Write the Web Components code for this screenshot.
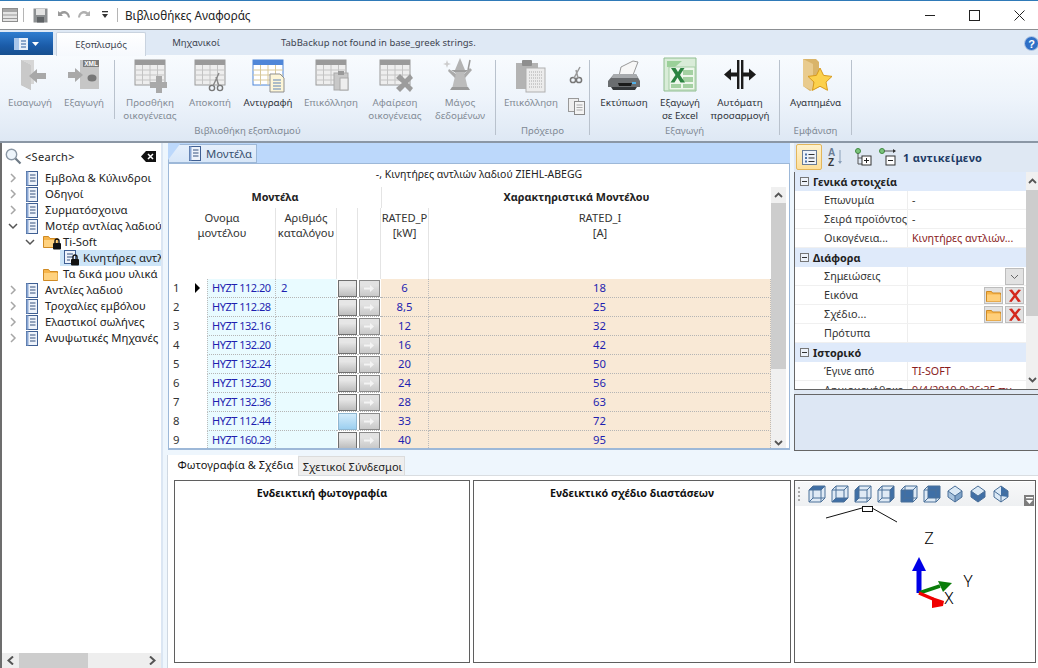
<!DOCTYPE html>
<html lang="el">
<head>
<meta charset="utf-8">
<title>Βιβλιοθήκες Αναφοράς</title>
<style>
  html, body { margin: 0; padding: 0; }
  body { width: 1038px; height: 668px; overflow: hidden; font: 11.3px "Noto Sans", "Liberation Sans", sans-serif; color: #222; }
</style>
</head>
<body>
<app-shell>
  <title-bar slot="title">Βιβλιοθήκες Αναφοράς</title-bar>
  <ribbon-tabs slot="tabs"></ribbon-tabs>
  <ribbon-bar slot="ribbon">
    <ribbon-group label="Βιβλιοθήκη εξοπλισμού" style="--w:495px">
      <ribbon-item icon="import" disabled style="--w:54px;margin-left:3px">Εισαγωγή</ribbon-item>
      <ribbon-item icon="xml" disabled style="--w:54px">Εξαγωγή</ribbon-item>
      <ribbon-sep inner></ribbon-sep>
      <ribbon-item icon="gridadd" disabled style="--w:68px">Προσθήκη<br>οικογένειας</ribbon-item>
      <ribbon-item icon="gridcut" disabled style="--w:52px">Αποκοπή</ribbon-item>
      <ribbon-item icon="gridcopy" style="--w:64px">Αντιγραφή</ribbon-item>
      <ribbon-item icon="gridpaste" disabled style="--w:62px">Επικόλληση</ribbon-item>
      <ribbon-item icon="griddel" disabled style="--w:66px">Αφαίρεση<br>οικογένειας</ribbon-item>
      <ribbon-item icon="wizard" disabled style="--w:64px">Μάγος<br>δεδομένων</ribbon-item>
    </ribbon-group>
    <ribbon-sep></ribbon-sep>
    <ribbon-group label="Πρόχειρο" style="--w:93px">
      <ribbon-item icon="clipboard" disabled style="--w:70px">Επικόλληση</ribbon-item>
      <ribbon-mini></ribbon-mini>
    </ribbon-group>
    <ribbon-sep></ribbon-sep>
    <ribbon-group label="Εξαγωγή" style="--w:189px">
      <ribbon-item icon="printer" style="--w:64px;margin-left:2px">Εκτύπωση</ribbon-item>
      <ribbon-item icon="excel" style="--w:48px">Εξαγωγή<br>σε Excel</ribbon-item>
      <ribbon-item icon="autofit" style="--w:72px">Αυτόματη<br>προσαρμογή</ribbon-item>
    </ribbon-group>
    <ribbon-sep></ribbon-sep>
    <ribbon-group label="Εμφάνιση" style="--w:71px">
      <ribbon-item icon="favorite" style="--w:71px">Αγαπημένα</ribbon-item>
    </ribbon-group>
    <ribbon-sep></ribbon-sep>
  </ribbon-bar>

  <tree-panel slot="tree">
    <tree-node kind="book" chev="right">Εμβολα &amp; Κύλινδροι</tree-node>
    <tree-node kind="book" chev="right">Οδηγοί</tree-node>
    <tree-node kind="book" chev="right">Συρματόσχοινα</tree-node>
    <tree-node kind="book" chev="down">Μοτέρ αντλίας λαδιού</tree-node>
    <tree-node kind="lockfolder" chev="down" depth="1">Ti-Soft</tree-node>
    <tree-node kind="lockbook" depth="2" selected>Κινητήρες αντλιών λαδιού</tree-node>
    <tree-node kind="folder" depth="1">Τα δικά μου υλικά</tree-node>
    <tree-node kind="book" chev="right">Αντλίες λαδιού</tree-node>
    <tree-node kind="book" chev="right">Τροχαλίες εμβόλου</tree-node>
    <tree-node kind="book" chev="right">Ελαστικοί σωλήνες</tree-node>
    <tree-node kind="book" chev="right">Ανυψωτικές Μηχανές</tree-node>
  </tree-panel>

  <model-grid slot="grid" caption="-, Κινητήρες αντλιών λαδιού ZIEHL-ABEGG"></model-grid>

  <prop-panel slot="props">
    <prop-group>Γενικά στοιχεία</prop-group>
    <prop-row name="Επωνυμία" value="-"></prop-row>
    <prop-row name="Σειρά προϊόντος" value="-"></prop-row>
    <prop-row name="Οικογένεια..." value="Κινητήρες αντλιών..." red></prop-row>
    <prop-group>Διάφορα</prop-group>
    <prop-row name="Σημειώσεις" action="drop"></prop-row>
    <prop-row name="Εικόνα" action="file"></prop-row>
    <prop-row name="Σχέδιο..." action="file"></prop-row>
    <prop-row name="Πρότυπα"></prop-row>
    <prop-group>Ιστορικό</prop-group>
    <prop-row name="Έγινε από" value="TI-SOFT" red></prop-row>
    <prop-row name="Δημιουργήθηκε" value="9/4/2019 9:26:35 πμ" red></prop-row>
  </prop-panel>

  <lower-panel slot="lower">
    <titled-box>Ενδεικτική φωτογραφία</titled-box>
    <titled-box>Ενδεικτικό σχέδιο διαστάσεων</titled-box>
    <view-3d></view-3d>
  </lower-panel>
</app-shell>

<script>
// icon helpers, everything is drawn in a 36x36 box unless noted
const svg = (w, h, body, vb) => `<svg xmlns="http://www.w3.org/2000/svg" width="${w}" height="${h}" viewBox="${vb || `0 0 ${w} ${h}`}">${body}</svg>`;

const table = (head, cell, line, x = 3) => `
  <rect x="${x}" y="3" width="30" height="25" fill="${cell}" stroke="${head}"/>
  <rect x="${x}" y="3" width="30" height="5" fill="${head}"/>
  <path d="M${x} 13h30M${x} 18h30M${x} 23h30M${x + 7.5} 8v20M${x + 15} 8v20M${x + 22.5} 8v20" stroke="${line}" fill="none"/>`;
const grayTable = table("#9a9a9a", "#eeeeee", "#c4c4c4");

const RIBBON_ICONS = {
  import: `<path d="M9 3l10 5v25l-10-5z" fill="#bdbdbd"/><path d="M9 3h13v24h-3v-19z" fill="#d6d6d6"/><path d="M9 28l10 5v-25l-10-5z" fill="#c9c9c9"/>
           <path d="M17 19l8-7v4h9v6h-9v4z" fill="#a8a8a8"/>`,
  xml: `<path d="M14 3h19v29h-19z" fill="#c6c6c6"/><rect x="17" y="3" width="16" height="7" fill="#7b7b7b"/>
        <text x="25" y="9" font-family="Liberation Sans" font-size="6.5" font-weight="700" text-anchor="middle" fill="#fff">XML</text>
        <ellipse cx="26" cy="21" rx="4.5" ry="3.5" fill="#777"/><path d="M2 15h7v-4l8 7-8 7v-4h-7z" fill="#a9a9a9"/>`,
  gridadd: grayTable + `<path d="M24 19h6v6h5v6h-5v5h-6v-5h-6v-6h6z" fill="#a9a9a9"/>`,
  gridcut: grayTable + `<circle cx="20" cy="31" r="2.6" fill="none" stroke="#777" stroke-width="1.4"/><circle cx="28" cy="31" r="2.6" fill="none" stroke="#777" stroke-width="1.4"/><path d="M21 29l6-13M27 29l-3-9" stroke="#888" stroke-width="1.4"/>`,
  gridcopy: table("#4f86d8", "#ffffff", "#d9c99a") + `<path d="M20 17h10l4 4v14h-14z" fill="#fdf6d8" stroke="#8f8f8f"/><path d="M23 23h8M23 26h8M23 29h8M23 32h8" stroke="#5d83b8"/>`,
  gridpaste: grayTable + `<rect x="21" y="16" width="14" height="17" fill="#c8c8c8" stroke="#aaa"/><rect x="25" y="14" width="6" height="4" fill="#999"/><rect x="27" y="21" width="8" height="12" fill="#eee" stroke="#aaa"/>`,
  griddel: grayTable + `<path d="M19 21l4-4 5 5 5-5 3 4-5 5 5 5-3 4-5-5-5 5-4-4 6-5z" fill="#9c9c9c"/>`,
  wizard: `<path d="M18 1l-5 12h10z" fill="#b3b3b3"/><path d="M9 13h18l-5 3h-8z" fill="#9d9d9d"/><path d="M14 15h8l4 17h-16z" fill="#bcbcbc"/><path d="M14 17l-7-5-1 2 7 7zM22 17l6-6 2 2-7 8z" fill="#aaa"/><path d="M28 3l-2 10" stroke="#999" stroke-width="1.5"/><path d="M5 3l1 3 3 1-3 1-1 3-1-3-3-1 3-1z" fill="#ccc"/><path d="M10 30h16l2 3h-20z" fill="#9a9a9a"/>`,
  clipboard: `<rect x="3" y="6" width="22" height="26" fill="#b3b3b3"/><rect x="9" y="3" width="10" height="6" rx="1" fill="#8e8e8e"/><rect x="13" y="11" width="19" height="24" fill="#ececec" stroke="#b0b0b0"/><path d="M16 15h13M16 18h13M16 21h13M16 24h13M16 27h13M16 30h13" stroke="#aaa" stroke-dasharray="1 1"/>`,
  printer: `<path d="M15 10l12-6 5 1-5 13-14 1z" fill="#f7f7f7" stroke="#999"/><path d="M2 24l6-7h22l4 7v6h-32z" fill="#6a6d70"/><path d="M8 17h22l2 4h-27z" fill="#a8abae"/><path d="M5 30h26l-2 3h-22z" fill="#34373a"/><path d="M12 26h14l-1 3h-12z" fill="#1a1a1a"/><rect x="26" y="25" width="4" height="2" fill="#52b0e8"/>`,
  excel: `<path d="M2 1h32v33h-32z" fill="#d9ecd8" stroke="#8fbd90"/><path d="M5 4h15l-7 6h-8z" fill="#9bd099"/><rect x="7" y="10" width="26" height="23" fill="#eef7ec" stroke="#a6cea5"/><path d="M21 13h10v5h-10zM21 20h10v5h-10zM9 27h10v4h-10zM21 27h10v4h-10z" fill="#a4d1a2"/><path d="M9 11h4.500l2.500 4 2.500-4h4l-4.500 7 5 7.500h-4.500l-3-5-3 5h-4l5-7.500z" fill="#2b8340"/>`,
  autofit: `<rect x="15" y="3" width="2.4" height="29" fill="#1b1b1b"/><rect x="19" y="3" width="2.4" height="29" fill="#1b1b1b"/><path d="M2 17.5l7-6v4h6v4h-6v4zM34 17.5l-7-6v4h-6v4h6v4z" fill="#1b1b1b"/>`,
  favorite: `<path d="M5 2h13l3 3v25l-9 4-7-5z" fill="#d9b46a"/><path d="M5 2l10 5v27l-10-5z" fill="#e9cb8e"/><path d="M22 11l3.6 7.4 8.4 1-6 5.7 1.5 8.2-7.5-4-7.5 4 1.5-8.2-6-5.7 8.4-1z" fill="#fcd14d" stroke="#d89a1c"/>`
};

const ICON_BOOK = svg(12, 15, `<rect x=".5" y=".5" width="11" height="14" fill="#eef3fb" stroke="#3f5f93"/><rect x=".5" y=".5" width="2" height="14" fill="#8aa7d4"/><path d="M4 4h5.500M4 7h5.500M4 10h5.500" stroke="#34507d"/>`);
const ICON_FOLDER = svg(15, 14, `<path d="M.5 2.5h5l1.5 2h7.500v9h-14z" fill="#f7b54a" stroke="#cf8a24"/><path d="M1 6h13.500v7h-13.500z" fill="#ffd27f"/>`);
const ICON_LOCK = `<rect x="1" y="5" width="8" height="6.500" rx="1" fill="#111"/><path d="M3 5V3a2 2 0 0 1 4 0v2" fill="none" stroke="#111" stroke-width="1.400"/>`;

const TREE_ICONS = {
  book: ICON_BOOK,
  folder: ICON_FOLDER,
  lockfolder: svg(20, 16, `<path d="M.5 2.500h5l1.500 2h7.500v9h-14z" fill="#f7b54a" stroke="#cf8a24"/><path d="M1 6h13.500v7h-13.500z" fill="#ffd27f"/><g transform="translate(9 4)">${ICON_LOCK}</g>`),
  lockbook: svg(17, 16, `<rect x=".5" y=".5" width="11" height="13" fill="#eef3fb" stroke="#3f5f93"/><path d="M3 4h6M3 7h6M3 10h3" stroke="#34507d"/><g transform="translate(6 4)">${ICON_LOCK}</g>`)
};

class AppShell extends HTMLElement {
  constructor() {
    super();
    this.attachShadow({ mode: "open" }).innerHTML = `
      <style>
        :host { display: grid; width: 1038px; height: 668px; overflow: hidden; background: #eef6fd;
                grid-template-rows: 30px 25px 88px 307px 1fr; grid-template-columns: 163px 1fr; }
        ::slotted([slot=title]), ::slotted([slot=tabs]), ::slotted([slot=ribbon]) { grid-column: 1 / 3; }
        ::slotted([slot=tree]) { grid-row: 4 / 6; }
        .upper { display: flex; gap: 4px; padding-left: 5px; min-height: 0; }
      </style>
      <slot name="title"></slot><slot name="tabs"></slot><slot name="ribbon"></slot>
      <slot name="tree"></slot>
      <div class="upper"><slot name="grid"></slot><slot name="props"></slot></div>
      <slot name="lower"></slot>`;
  }
}

class TitleBar extends HTMLElement {
  constructor() {
    super();
    this.attachShadow({ mode: "open" }).innerHTML = `
      <style>
        :host { display: flex; align-items: center; height: 28px; background: #fff; border-top: 1px solid #2f7ab8; border-bottom: 1px solid #8c8f92; font-size: 11.7px; color: #222; overflow: hidden; }
        .ic { display: flex; margin-left: 2px; flex: none; }
        .bar { width: 1px; height: 14px; background: #b5b5b5; flex: none; }
        .text { margin-left: 7px; flex: 1; }
        .wins { display: flex; margin-right: -4px; flex: none; }
        .wins span { display: flex; width: 45px; justify-content: center; align-items: center; }
      </style>
      <span class="ic">${svg(16, 16, `<rect x=".5" y="1.500" width="15" height="13" fill="#e4e4e4" stroke="#8e8e8e"/><rect x="1" y="2" width="14" height="3" fill="#a6a6a6"/><path d="M1 8h14M1 11.500h14" stroke="#9a9a9a"/>`)}</span>
      <span class="bar" style="margin-left:5px"></span>
      <span class="ic" style="margin-left:9px">${svg(15, 15, `<rect x=".5" y=".5" width="14" height="14" fill="#8d9092"/><rect x="3" y="1" width="9" height="6" fill="#e3e3e3"/><rect x="4" y="9" width="7" height="5.500" fill="#5f6366"/>`)}</span>
      <span class="ic" style="margin-left:9px">${svg(14, 13, `<path d="M1 2v5h5L4.500 5.500C7 3.500 10.500 4.500 11 8.500l2 0C12.500 2.500 7 .5 3 3.500z" fill="#9a9a9a"/>`)}</span>
      <span class="ic" style="margin-left:6px">${svg(14, 13, `<path d="M13 2v5H8l1.500-1.500C7 3.500 3.500 4.500 3 8.500l-2 0C1.500 2.500 7 .5 11 3.500z" fill="#b0b0b0"/>`)}</span>
      <span class="ic" style="margin-left:11px">${svg(7, 8, `<rect y="0" width="6" height="1.300" fill="#333"/><path d="M0 3h6l-3 4z" fill="#333"/>`)}</span>
      <span class="bar" style="margin-left:8px"></span>
      <span class="text"><slot></slot></span>
      <span class="wins">
        <span>${svg(10, 10, `<path d="M0 5.500h10" stroke="#222"/>`)}</span>
        <span>${svg(11, 11, `<rect x=".5" y=".5" width="10" height="10" fill="none" stroke="#222"/>`)}</span>
        <span>${svg(11, 11, `<path d="M.5.500l10 10M10.500.5l-10 10" stroke="#222"/>`)}</span>
      </span>`;
  }
}

class RibbonTabs extends HTMLElement {
  constructor() {
    super();
    this.attachShadow({ mode: "open" }).innerHTML = `
      <style>
        :host { display: flex; height: 25px; background: #dfe9f5; align-items: stretch; font-size: 9.5px; color: #3d4450; position: relative; }
        .app { width: 53px; margin-top: 2px; background: linear-gradient(#2f7ed0, #1b5ba8 60%, #17508f); display: flex; align-items: center; justify-content: center; gap: 4px; }
        .tab { display: flex; align-items: center; justify-content: center; }
        .on { width: 90px; margin: 2px 0 -1px 3px; background: linear-gradient(#fff, #f6f9fd); border: 1px solid #c9d3df; border-bottom: 0; border-radius: 2px 2px 0 0; box-sizing: border-box; }
        .off { width: 100px; }
        .note { margin-left: 35px; }
        .help { position: absolute; right: -1px; top: 6px; }
      </style>
      <div class="app">${svg(14, 12, `<rect width="14" height="12" fill="#eaf1fa"/><rect x="0" width="5" height="12" fill="#a9c6ea"/><path d="M7 3h5M7 6h5M7 9h5" stroke="#2f5f9d"/>`)}${svg(7, 4, `<path d="M0 0h7l-3.500 4z" fill="#fff"/>`)}</div>
      <div class="tab on">Εξοπλισμός</div>
      <div class="tab off">Μηχανικοί</div>
      <div class="tab note">TabBackup not found in base_greek strings.</div>
      <div class="help">${svg(15, 15, `<circle cx="7.500" cy="7.500" r="7" fill="#2f6fc6" stroke="#b8cbe6"/><text x="7.500" y="11.500" font-family="Liberation Sans" font-weight="700" font-size="11" text-anchor="middle" fill="#fff">?</text>`)}</div>`;
  }
}

class RibbonBar extends HTMLElement {
  constructor() {
    super();
    this.attachShadow({ mode: "open" }).innerHTML = `
      <style>
        :host { display: flex; height: 86px; border-bottom: 2px solid #8b97a5; background: linear-gradient(#f8fbfe, #eef4fb 50%, #dee8f4); border-top: 1px solid #d3dde9; margin-top: -1px; }
      </style>
      <slot></slot>`;
  }
}

class RibbonGroup extends HTMLElement {
  constructor() {
    super();
    this.attachShadow({ mode: "open" }).innerHTML = `
      <style>
        :host { display: flex; flex-direction: column; width: var(--w); flex: none; box-sizing: border-box; }
        .items { display: flex; flex: 1; min-height: 0; }
        .label { height: 20px; flex: none; text-align: center; font-size: 9.6px; color: #7f8994; line-height: 20px; }
      </style>
      <div class="items"><slot></slot></div>
      <div class="label">${this.getAttribute("label")}</div>`;
  }
}

class RibbonItem extends HTMLElement {
  constructor() {
    super();
    this.attachShadow({ mode: "open" }).innerHTML = `
      <style>
        :host { display: flex; flex-direction: column; align-items: center; width: var(--w); flex: none; padding-top: 2px; font-size: 9.8px; line-height: 13px; text-align: center; color: #30343a; white-space: nowrap; }
        :host([disabled]) { color: #848c96; }
        .icon { height: 36px; display: flex; margin-bottom: 3px; }
      </style>
      <div class="icon">${svg(36, 36, RIBBON_ICONS[this.getAttribute("icon")])}</div>
      <div><slot></slot></div>`;
  }
}

class RibbonMini extends HTMLElement {
  constructor() {
    super();
    this.attachShadow({ mode: "open" }).innerHTML = `
      <style>
        :host { display: flex; flex-direction: column; align-items: center; width: 20px; padding-top: 11px; gap: 14px; }
      </style>
      ${svg(14, 18, `<circle cx="4" cy="14" r="2.600" fill="none" stroke="#777" stroke-width="1.500"/><circle cx="10" cy="14" r="2.600" fill="none" stroke="#777" stroke-width="1.500"/><path d="M5 12l6-11M9 12l-2-8" stroke="#9a9a9a" stroke-width="1.500"/>`)}
      ${svg(17, 17, `<rect x=".5" y=".5" width="10" height="13" fill="#eee" stroke="#999"/><rect x="6.500" y="3.500" width="10" height="13" fill="#f4f4f4" stroke="#8a8a8a"/><path d="M8.500 7h6M8.500 9.500h6M8.500 12h6" stroke="#aaa"/>`)}`;
  }
}

class RibbonSep extends HTMLElement {
  constructor() {
    super();
    this.attachShadow({ mode: "open" }).innerHTML = `
      <style>
        :host { display: block; width: 1px; flex: none; margin-top: 5px; margin-bottom: 6px; background: #b9c2cd; }
        :host([inner]) { margin: 5px 0 2px 3px; margin-right: 1px; }
      </style>`;
  }
}

class TreePanel extends HTMLElement {
  constructor() {
    super();
    this.attachShadow({ mode: "open" }).innerHTML = `
      <style>
        :host { display: flex; flex-direction: column; background: #fff; border-left: 2px solid #6d6d6d; border-right: 2px solid #dbe6f3; min-height: 0; box-sizing: border-box; width: 163px; overflow: hidden; }
        .search { display: flex; align-items: center; height: 27px; flex: none; padding-left: 3px; font-size: 11px; letter-spacing: .3px; color: #222; }
        .search .t { margin-left: 3px; flex: 1; }
        .search .x { margin-right: 5px; display: flex; }
        .nodes { flex: 1; overflow: hidden; }
        .scroll { display: flex; align-items: center; height: 15px; flex: none; background: #eeeeee; }
        .scroll .a { width: 17px; display: flex; justify-content: center; }
        .scroll .thumb { width: 69px; height: 15px; background: #cdcdcd; }
        .scroll .rest { flex: 1; }
      </style>
      <div class="search">
        ${svg(17, 17, `<circle cx="6.500" cy="6.500" r="5.200" fill="#eef5fb" stroke="#8c98a5" stroke-width="1.400"/><path d="M10.500 10.500l5 5" stroke="#6e7a86" stroke-width="2.200"/>`)}
        <span class="t">&lt;Search&gt;</span>
        <span class="x">${svg(15, 11, `<path d="M0 5.500L5 0h10v11H5z" fill="#111"/><path d="M7 3l5 5M12 3l-5 5" stroke="#fff" stroke-width="1.500"/>`)}</span>
      </div>
      <div class="nodes"><slot></slot></div>
      <div class="scroll">
        <span class="a">${svg(7, 9, `<path d="M6 .5l-4.500 4 4.500 4" fill="none" stroke="#555" stroke-width="2"/>`)}</span>
        <span class="thumb"></span><span class="rest"></span>
        <span class="a">${svg(7, 9, `<path d="M1 .5l4.500 4-4.500 4" fill="none" stroke="#555" stroke-width="2"/>`)}</span>
      </div>`;
  }
}

class TreeNode extends HTMLElement {
  constructor() {
    super();
    const depth = +(this.getAttribute("depth") || 0);
    const chev = this.getAttribute("chev");
    const chevIcon = chev === "right"
      ? svg(7, 10, `<path d="M1 1l4 4-4 4" fill="none" stroke="#a6a6a6" stroke-width="1.500"/>`)
      : chev === "down" ? svg(10, 7, `<path d="M1 1l4 4 4-4" fill="none" stroke="#555" stroke-width="1.500"/>`) : "";
    const left = [24, 41, 62][depth];
    const kind = this.getAttribute("kind");
    const gap = { book: 7, folder: 5, lockfolder: 0, lockbook: 2 }[kind];
    this.attachShadow({ mode: "open" }).innerHTML = `
      <style>
        :host { display: block; height: 16px; line-height: 16px; white-space: nowrap; font-size: 11.3px; position: relative; }
        .row { display: flex; align-items: center; height: 16px; padding-left: ${left}px; }
        .sel { background: #cde5f8; margin-left: 58px; padding-left: 4px; }
        .chev { width: 10px; margin-left: ${left - 18}px; margin-right: 8px; display: flex; justify-content: center; }
        .ic { display: flex; }
        .tx { margin-left: ${gap}px; }
      </style>
      <div class="row ${this.hasAttribute("selected") ? "sel" : ""}" ${chev ? `style="padding-left:0"` : ""}>
        ${chev ? `<span class="chev">${chevIcon}</span>` : ""}
        <span class="ic">${TREE_ICONS[kind]}</span>
        <span class="tx"><slot></slot></span>
      </div>`;
  }
}

const MODELS = [
  ["ΗΥΖΤ 112.20", "2", "6", "18"], ["ΗΥΖΤ 112.28", "", "8,5", "25"], ["ΗΥΖΤ 132.16", "", "12", "32"],
  ["ΗΥΖΤ 132.20", "", "16", "42"], ["ΗΥΖΤ 132.24", "", "20", "50"], ["ΗΥΖΤ 132.30", "", "24", "56"],
  ["ΗΥΖΤ 132.36", "", "28", "63"], ["ΗΥΖΤ 112.44", "", "33", "72"], ["ΗΥΖΤ 160.29", "", "40", "95"]
];

class ModelGrid extends HTMLElement {
  constructor() {
    super();
    const rows = MODELS.map((m, i) => `
      <div class="row">
        <div class="num">${i + 1}${i === 0 ? `<span class="cur"></span>` : ""}</div>
        <div class="name">${m[0]}</div>
        <div class="cat">${m[1]}</div>
        <div class="bcell"><span class="btn ${i === 7 ? "hot" : ""}"></span></div>
        <div class="bcell"><span class="btn go">${svg(11, 9, `<path d="M0 3.500h6V1l4 3.500L6 8V5.500H0z" fill="#f4f4f4"/>`)}</span></div>
        <div class="p">${m[2]}</div>
        <div class="i">${m[3]}</div>
      </div>`).join("");
    this.attachShadow({ mode: "open" }).innerHTML = `
      <style>
        :host { display: flex; flex-direction: column; width: 622px; flex: none; height: 307px; box-sizing: border-box; --cols: 38px 69px 61px 21px 23px 48px 1fr; }
        .strip { height: 20px; flex: none; background: #bcd8fb; border-bottom: 1px solid #9db8d8; display: flex; box-sizing: content-box; }
        .tab { display: flex; align-items: center; padding: 0 4px 0 21px; width: 64px; height: 19px; margin-top: 1px; background: linear-gradient(#e6f0fc, #d7e6f8); clip-path: polygon(12px 0, 100% 0, 100% 100%, 0 100%, 0 16px); box-shadow: inset 0 0 0 1px #9db8d8; font-size: 11.3px; color: #39516f; gap: 5px; }
        .body { flex: 1; display: flex; flex-direction: column; min-height: 0; background: #fff; border: 1px solid #9db8d8; border-top: 0; border-bottom-width: 2px; }
        .caption { height: 23px; flex: none; line-height: 21px; text-align: center; font-size: 10.5px; box-sizing: border-box; }
        .wrap { flex: 1; min-height: 0; display: flex; padding-right: 3px; }
        .table { flex: 1; overflow: hidden; }
        .groups, .heads, .row { display: grid; grid-template-columns: var(--cols); }
        .groups { height: 21px; }
        .g { font-weight: 700; font-size: 10.8px; text-align: center; line-height: 20px; }
        .g.a { grid-column: 1 / 6; }
        .g.b { grid-column: 6 / 8; border-left: 1px solid #e4e4e4; }
        .heads { height: 71px; font-size: 11.2px; line-height: 15px; text-align: center; color: #333; }
        .heads > div { border-right: 1px solid #e4e4e4; padding-top: 2px; white-space: nowrap; }
        .heads .first { grid-column: 1 / 3; }
        .heads > div:last-child { border-right: 0; }
        .row { height: 19px; font-size: 11.3px; line-height: 17px; color: #1f1fb0; }
        .row > div { box-sizing: border-box; border-bottom: 1px dotted #b5b5b5; }
        .num { color: #333; padding-left: 4px; border-bottom: 0 !important; position: relative; }
        .cur { position: absolute; left: 26px; top: 4px; border-left: 5px solid #000; border-top: 5px solid transparent; border-bottom: 5px solid transparent; }
        .name { background: #e9fbff; padding-left: 4px; border-left: 1px dotted #bbb; border-right: 1px dotted #bbb; white-space: nowrap; font-size: 11px; letter-spacing: -.5px; overflow: hidden; }
        .cat { background: #e9fbff; padding-left: 5px; }
        .bcell { background: #fff; padding: 1px 1px 0 1px; }
        .btn { display: flex; align-items: center; justify-content: center; box-sizing: border-box; height: 17px; border: 1px solid #6f6f6f; background: linear-gradient(#e6e6e6 30%, #bdbdbd); }
        .go { background: linear-gradient(#e2e2e2 30%, #c9c9c9); border-color: #8a8a8a; }
        .hot { background: linear-gradient(#d4ecfb, #9ccff0); border-color: #8fb6d0; }
        .p, .i { background: #f9e9d6; text-align: center; border-right: 1px dotted #bbb; }
        .bar { width: 15px; flex: none; display: flex; flex-direction: column; background: #f0f0f0; }
        .up { height: 16px; display: flex; align-items: center; justify-content: center; }
        .thumb { height: 166px; background: #cdcdcd; }
        .bar .sp { flex: 1; }
      </style>
      <div class="strip"><div class="tab">${ICON_BOOK}<span>Μοντέλα</span></div></div>
      <div class="body">
        <div class="caption">${this.getAttribute("caption")}</div>
        <div class="wrap">
          <div class="table">
            <div class="groups"><div class="g a">Μοντέλα</div><div class="g b">Χαρακτηριστικά Μοντέλου</div></div>
            <div class="heads">
              <div class="first">Ονομα<br>μοντέλου</div>
              <div>Αριθμός<br>καταλόγου</div>
              <div></div><div></div>
              <div>RATED_P<br>[kW]</div>
              <div>RATED_I<br>[A]</div>
            </div>
            ${rows}
          </div>
          <div class="bar">
            <div class="up">${svg(9, 6, `<path d="M1 5l3.500-3.500L8 5" fill="none" stroke="#555" stroke-width="1.800"/>`)}</div>
            <div class="thumb"></div><div class="sp"></div>
            <div class="up" style="height:11px">${svg(9, 6, `<path d="M1 1l3.500 3.500L8 1" fill="none" stroke="#555" stroke-width="1.800"/>`)}</div>
          </div>
        </div>
      </div>`;
  }
}

class PropPanel extends HTMLElement {
  constructor() {
    super();
    this.attachShadow({ mode: "open" }).innerHTML = `
      <style>
        :host { display: flex; flex-direction: column; width: 244px; flex: none; height: 307px; background: #dfe8f3; }
        .tools { height: 28px; flex: none; display: flex; align-items: center; box-sizing: border-box; padding-left: 2px; border-bottom: 1px solid #dfe8f3; box-sizing: content-box; }
        .tb { display: flex; align-items: center; justify-content: center; }
        .active { width: 26px; height: 26px; box-sizing: border-box; border: 1px solid #e3b65a; background: linear-gradient(#fff2cc, #fcdf9b); border-radius: 2px; }
        .name { margin-left: 6px; font-weight: 700; font-size: 11px; color: #1d3b66; letter-spacing: .3px; white-space: nowrap; }
        .list { height: 218px; flex: none; display: flex; background: #fff; border: 1px solid #666; border-width: 0 0 1px 1px; box-sizing: border-box; }
        .rows { flex: 1; overflow: hidden; min-width: 0; }
        .bar { width: 12px; flex: none; display: flex; flex-direction: column; background: #f0f0f0; }
        .a { height: 18px; display: flex; align-items: center; justify-content: center; }
        .thumb { height: 126px; background: #cdcdcd; }
        .sp { flex: 1; }
        .desc { height: 57px; flex: none; margin-top: 4px; background: #dde7f4; border: 1px solid #666; border-right: 0; box-sizing: border-box; }
      </style>
      <div class="tools">
        <span class="tb active">${svg(15, 15, `<rect x=".5" y=".5" width="14" height="14" fill="#eef3fa" stroke="#6a7d96"/><path d="M3 3.500h2v2h-2zM3 7h2v2h-2zM3 10.500h2v2h-2z" fill="#4f74a8"/><path d="M6.500 4.500h6M6.500 8h6M6.500 11.500h6" stroke="#333"/>`)}</span>
        <span class="tb" style="margin-left:6px">${svg(16, 20, `<text x="0" y="9" font-family="Liberation Sans" font-size="10" font-weight="700" fill="#6a7d96">A</text><text x="0" y="19" font-family="Liberation Sans" font-size="10" font-weight="700" fill="#3a3a3a">Z</text><path d="M12 3v13" stroke="#8aa0ba"/><path d="M10 14l2 3 2-3z" fill="#8aa0ba"/>`)}</span>
        <span class="tb" style="margin-left:10px">${svg(18, 19, `<circle cx="4" cy="3" r="2.500" fill="#7cc47c" stroke="#3f8a3f"/><path d="M4 5v11h4M4 10h4" stroke="#555" fill="none"/><rect x="8" y="8" width="9" height="9" fill="#fff" stroke="#333"/><path d="M10 12.500h5M12.500 10v5" stroke="#222"/>`)}</span>
        <span class="tb" style="margin-left:7px">${svg(18, 19, `<circle cx="3" cy="3" r="2.500" fill="#7cc47c" stroke="#3f8a3f"/><path d="M5 3h11" stroke="#555"/><path d="M14 1l3 2-3 2z" fill="#333"/><rect x="7" y="8" width="9" height="9" fill="#fff" stroke="#333"/><path d="M9 12.500h5" stroke="#222"/>`)}</span>
        <span class="name">1 αντικείμενο</span>
      </div>
      <div class="list">
        <div class="rows"><slot></slot></div>
        <div class="bar">
          <div class="a">${svg(9, 6, `<path d="M1 5l3.500-3.500L8 5" fill="none" stroke="#555" stroke-width="1.800"/>`)}</div>
          <div class="thumb"></div><div class="sp"></div>
          <div class="a">${svg(9, 6, `<path d="M1 1l3.500 3.500L8 1" fill="none" stroke="#555" stroke-width="1.800"/>`)}</div>
        </div>
      </div>
      <div class="desc"></div>`;
  }
}

class PropGroup extends HTMLElement {
  constructor() {
    super();
    this.attachShadow({ mode: "open" }).innerHTML = `
      <style>
        :host { display: flex; align-items: center; height: 19px; background: #dfeafa; font-weight: 700; font-size: 10.8px; color: #222; padding-left: 5px; }
        span { display: flex; margin-right: 4px; }
      </style>
      <span>${svg(9, 9, `<rect x=".5" y=".5" width="8" height="8" fill="#eef3fa" stroke="#777"/><path d="M2 4.500h5" stroke="#333"/>`)}</span><slot></slot>`;
  }
}

class PropRow extends HTMLElement {
  constructor() {
    super();
    const action = this.getAttribute("action");
    const value = this.getAttribute("value") || "";
    let act = "";
    if (action === "drop") {
      act = `<span class="b wide">${svg(9, 6, `<path d="M1 1l3.500 3.500L8 1" fill="none" stroke="#666"/>`)}</span>`;
    } else if (action === "file") {
      act = `<span class="b">${svg(15, 12, `<path d="M.5 1.500h5l1 1.500h8v8.500h-14z" fill="#f7b54a" stroke="#cf8a24"/><path d="M1 4.500h13.500v7h-13.500z" fill="#ffcf7a"/>`)}</span>
             <span class="b">${svg(14, 13, `<path d="M1 1l3-.5 3 4 3.500-4 2.500.5-4.500 5.500 4.500 6-3 .5-3-4.500-3.500 4.500-2.500-.5 4.500-6z" fill="#d4281c"/>`)}</span>`;
    }
    this.attachShadow({ mode: "open" }).innerHTML = `
      <style>
        :host { display: grid; grid-template-columns: 113px 1fr; height: 19px; line-height: 18px; font-size: 10.8px; box-sizing: border-box; border-bottom: 1px solid #f0f0f0; color: #333; white-space: nowrap; position: relative; }
        .n { padding-left: 29px; border-right: 1px solid #eee; overflow: hidden; }
        .v { padding-left: 4px; overflow: hidden; font-size: 10.7px; }
        :host([red]) .v { color: #8a1c1c; }
        .acts { position: absolute; right: 2px; top: 1px; display: flex; gap: 2px; }
        .b { display: flex; align-items: center; justify-content: center; box-sizing: border-box; width: 19px; height: 17px; background: #e2e2e2; border: 1px solid #bdbdbd; }
      </style>
      <div class="n">${this.getAttribute("name")}</div><div class="v">${value}</div>
      ${act ? `<div class="acts">${act}</div>` : ""}`;
  }
}

class LowerPanel extends HTMLElement {
  constructor() {
    super();
    this.attachShadow({ mode: "open" }).innerHTML = `
      <style>
        :host { display: flex; flex-direction: column; min-height: 0; padding-left: 4px; padding-top: 5px; box-sizing: border-box; height: 218px; }
        .tabs { display: flex; height: 21px; flex: none; border-left: 1px solid #cfd8e2; border-bottom: 1px solid #d9dde1; box-sizing: border-box; font-size: 11px; }
        .tab { white-space: nowrap; box-sizing: border-box; }
        .on { width: 130px; height: 21px; padding-left: 5px; background: #fff; text-align: center; line-height: 20px; color: #111; letter-spacing: .05px; }
        .off { width: 107px; height: 19px; margin-top: 1px; padding-left: 2px; background: #eeeeee; border: 1px solid #dcdcdc; border-bottom: 0; text-align: center; line-height: 19px; color: #222; }
        .content { flex: 1; background: #fff; display: grid; grid-template-columns: 296px 318px 242px; gap: 3px; padding: 4px 0 5px 6px; border-left: 1px solid #cfd8e2; min-height: 0; }
      </style>
      <div class="tabs"><div class="tab on">Φωτογραφία &amp; Σχέδια</div><div class="tab off">Σχετικοί Σύνδεσμοι</div></div>
      <div class="content"><slot></slot></div>`;
  }
}

class TitledBox extends HTMLElement {
  constructor() {
    super();
    this.attachShadow({ mode: "open" }).innerHTML = `
      <style>
        :host { display: block; border: 1px solid #5f5f5f; background: #fff; text-align: center; font-weight: 700; font-size: 10.700px; line-height: 24px; color: #111; }
      </style>
      <slot></slot>`;
  }
}

const FACES = {
  top: "1,5 5,1 17,1 13,5", right: "13,5 17,1 17,13 13,17", front: "1,5 13,5 13,17 1,17",
  back: "5,1 17,1 17,13 5,13", left: "1,5 5,1 5,13 1,17", bottom: "1,17 5,13 17,13 13,17"
};
const cube = (face) => svg(18, 18, `
  <polygon points="1,5 5,1 17,1 17,13 13,17 1,17" fill="#dfeaf5"/>
  <polygon points="${FACES[face]}" fill="#3f6fa6"/>
  <path d="M1 5L5 1H17V13L13 17H1zM1 5H13V17M13 5L17 1M5 1V13H17M5 13L1 17" fill="none" stroke="#4a7099"/>`);
const diamond = (body) => svg(18, 18, `
  <polygon points="9,1 16,6 16,12 9,17 2,12 2,6" fill="#dbe9f5"/>${body}
  <path d="M9 1L16 6V12L9 17L2 12V6zM2 6L9 11L16 6M9 11V17" fill="none" stroke="#4a6f98"/>`);
const CUBES = [
  cube("top"), cube("bottom"), cube("left"), cube("right"), cube("front"), cube("back"),
  diamond(`<polygon points="2,6 9,11 9,17 2,12" fill="#a9c4de"/><polygon points="16,6 9,11 9,17 16,12" fill="#7fa3c8"/>`),
  diamond(`<polygon points="2,6 9,11 9,17 2,12" fill="#3f6fa6"/><polygon points="16,6 9,11 9,17 16,12" fill="#3f6fa6"/>`),
  diamond(`<polygon points="9,1 16,6 16,12 9,11" fill="#3f6fa6"/>`)
];

class View3d extends HTMLElement {
  constructor() {
    super();
    this.attachShadow({ mode: "open" }).innerHTML = `
      <style>
        :host { display: flex; flex-direction: column; border: 1px solid #5f5f5f; background: #fff; position: relative; overflow: hidden; }
        .bar { height: 24px; flex: none; margin-top: 1px; display: flex; align-items: center; background: linear-gradient(#f7f8f9, #eef0f2); padding-left: 3px; position: relative; }
        .grip { width: 2px; height: 14px; margin-right: 8px; background: repeating-linear-gradient(#aaa 0 2px, transparent 2px 4px); }
        .c { display: flex; width: 23px; justify-content: flex-start; }
        .more { position: absolute; right: 1px; bottom: 0; width: 10px; height: 11px; background: #7d7d7d; display: flex; align-items: center; justify-content: center; }
        svg.draw { flex: 1; display: block; }
      </style>
      <div class="bar"><span class="grip"></span>${CUBES.map(c => `<span class="c">${c}</span>`).join("")}
        <span class="more">${svg(7, 7, `<rect width="7" height="1.300" fill="#fff"/><path d="M0 3h7l-3.500 4z" fill="#fff"/>`)}</span></div>
      <svg class="draw" width="240" height="156" viewBox="0 0 240 156">
        <path d="M31 12L67 2M77 2L102 16" stroke="#111" fill="none"/>
        <rect x="67.500" y="0.500" width="10" height="5" fill="none" stroke="#111"/>
        <path d="M124 87L124 64" stroke="#0000e6" stroke-width="5"/>
        <polygon points="124,51 131,65 117,65" fill="#0000e6"/>
        <path d="M124 87L145 80" stroke="#0a7d0a" stroke-width="3.500"/>
        <polygon points="143,75 157,77 148,86" fill="#0a7d0a"/>
        <path d="M124 87L138 93" stroke="#f00000" stroke-width="3.500"/>
        <polygon points="137,91 149,95 148,100 137,102" fill="#f00000"/>
        <g font-family="Roboto, 'Liberation Sans', sans-serif" font-weight="300" font-size="16" text-anchor="middle" fill="#000">
          <text x="134" y="38">Z</text>
          <text x="173" y="81">Y</text>
          <text x="154" y="98">X</text>
        </g>
      </svg>`;
  }
}

customElements.define("app-shell", AppShell);
customElements.define("title-bar", TitleBar);
customElements.define("ribbon-tabs", RibbonTabs);
customElements.define("ribbon-bar", RibbonBar);
customElements.define("ribbon-group", RibbonGroup);
customElements.define("ribbon-item", RibbonItem);
customElements.define("ribbon-mini", RibbonMini);
customElements.define("ribbon-sep", RibbonSep);
customElements.define("tree-panel", TreePanel);
customElements.define("tree-node", TreeNode);
customElements.define("model-grid", ModelGrid);
customElements.define("prop-panel", PropPanel);
customElements.define("prop-group", PropGroup);
customElements.define("prop-row", PropRow);
customElements.define("lower-panel", LowerPanel);
customElements.define("titled-box", TitledBox);
customElements.define("view-3d", View3d);
</script>
</body>
</html>
